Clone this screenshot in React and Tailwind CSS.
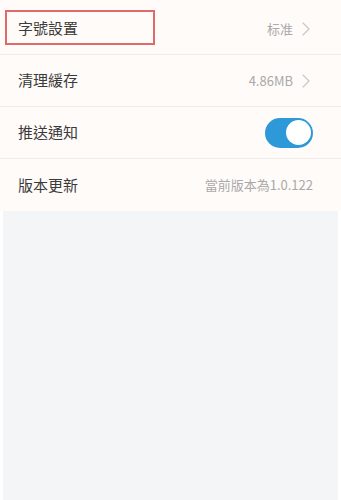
import { ChevronRight } from 'lucide-react';

const font = { fontFamily: '"Noto Sans CJK TC", "Noto Sans CJK SC", sans-serif' };

const Row = ({ label, children, last }) => (
  <div className={`flex items-center justify-between h-[52px] pl-[18px] pr-[29px] ${last ? '' : 'border-b border-[#efeceb]'}`}>
    <span className="text-[15px] text-[#3a3a3a]">{label}</span>
    <div className="flex items-center text-[13px] text-[#a9a9a9]">{children}</div>
  </div>
);

const Chevron = () => (
  <ChevronRight size={24} strokeWidth={1.1} className="text-[#c6c6c6] ml-[1px] -mr-[6px]" />
);

export default function App() {
  return (
    <div className="w-[341px] h-[500px] bg-white flex flex-col" style={font}>
      <div className="relative bg-[#fffbf9] pt-[3px]">
        <Row label="字號設置">
          <span>标准</span>
          <Chevron />
        </Row>
        <Row label="清理緩存">
          <span>4.86MB</span>
          <Chevron />
        </Row>
        <Row label="推送通知">
          <div className="w-[48px] h-[30px] rounded-full bg-[#2d99d8] flex items-center justify-end pr-[2px] -mr-[1px]">
            <div className="w-[25px] h-[25px] rounded-full bg-white" />
          </div>
        </Row>
        <Row label="版本更新" last>
          <span className="-mr-[1px]">當前版本為1.0.122</span>
        </Row>
        <div className="absolute left-[5px] top-[10px] w-[150px] h-[35px] border-2 border-[#e06a6a]" />
      </div>
      <div className="flex-1 mx-[3px] bg-[#f4f5f7]" />
    </div>
  );
}
